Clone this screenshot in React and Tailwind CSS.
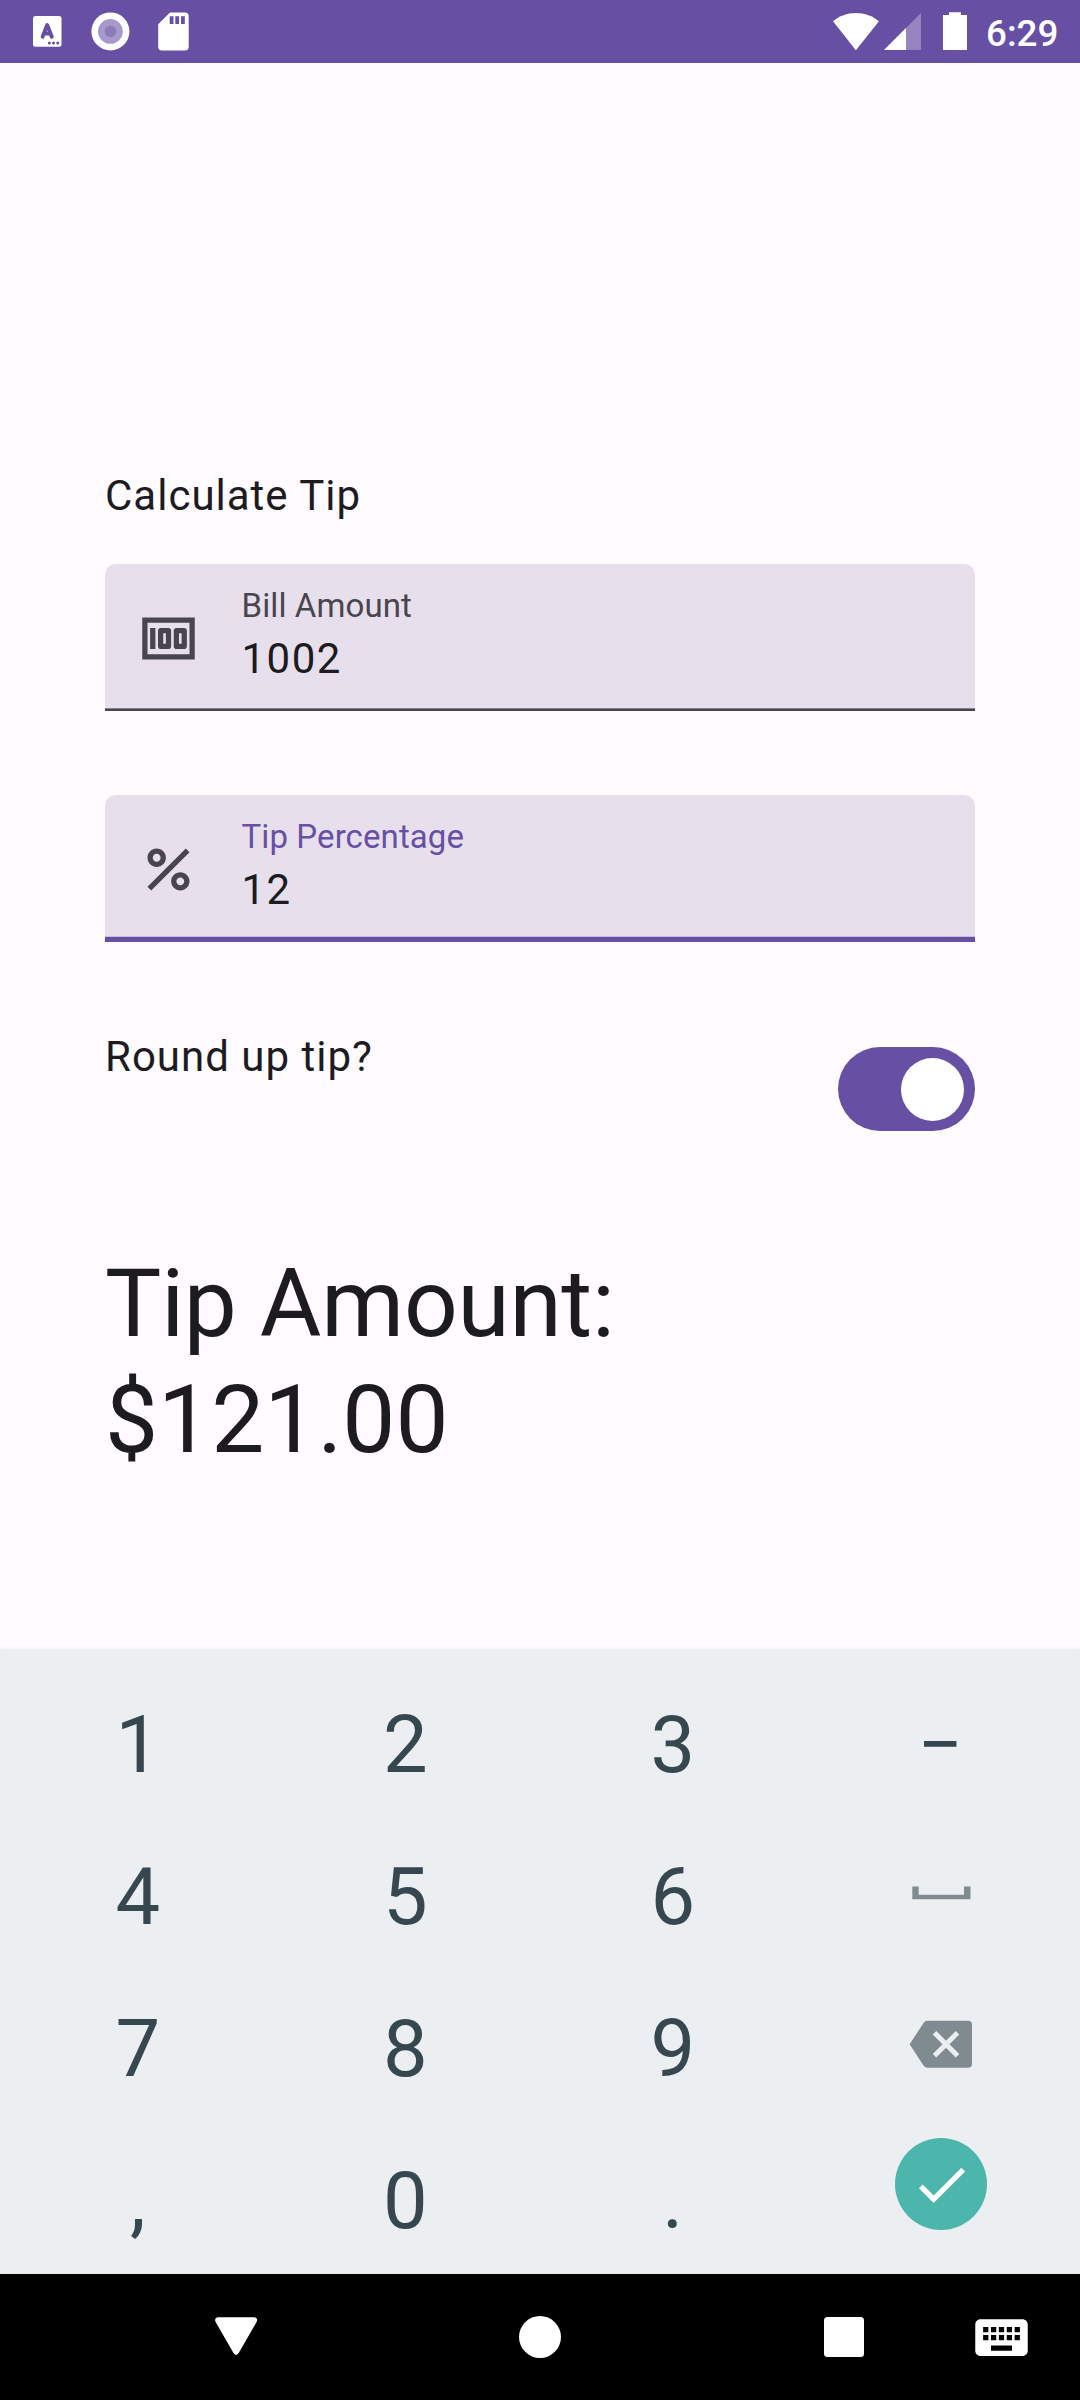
import { MdMoney, MdPercent, MdCheck, MdKeyboard } from "react-icons/md";

function StatusBar() {
  return (
    <header className="flex h-[63px] items-start bg-[#6750a4] text-white">
      <svg className="ml-[33px] mt-[16px] h-[31px] w-[29px]" viewBox="0 0 29 31">
        <rect width="28.5" height="30.7" rx="2.5" fill="#fff" />
        <path
          d="M9.6 20.7 14.2 9 18.8 20.7M10.8 17.6H17.6"
          fill="none"
          stroke="#6750a4"
          strokeWidth="3.9"
          strokeLinecap="round"
          strokeLinejoin="round"
        />
        <circle cx="16.3" cy="27" r="1.5" fill="#6750a4" />
        <circle cx="20.5" cy="27" r="1.5" fill="#6750a4" />
        <circle cx="24.7" cy="27" r="1.5" fill="#6750a4" />
      </svg>
      <svg className="ml-[29px] mt-[12px] h-[39px] w-[39px]" viewBox="0 0 39 39">
        <circle cx="19.4" cy="19.4" r="19" fill="#fff" />
        <circle cx="19.4" cy="19.4" r="12.4" fill="#a699cb" />
        <circle cx="19.4" cy="19.4" r="5.8" fill="#8c7ab9" />
      </svg>
      <svg className="ml-[28px] mt-[12px] h-[39px] w-[31px]" viewBox="0 0 31 39">
        <path
          d="M12 .6H27a3.7 3.7 0 0 1 3.7 3.7V34.7a3.7 3.7 0 0 1-3.7 3.7H4A3.7 3.7 0 0 1 .2 34.7V12.2Z"
          fill="#fff"
        />
        <path d="M11.7 4.3h3.8v7.7h-3.8zM17.3 4.3h3.8v7.7h-3.8zM23 4.3h3.8v7.7H23z" fill="#6750a4" />
      </svg>
      <svg className="ml-auto mt-[12px] h-[39px] w-[47px]" viewBox="0 0 47 39">
        <path d="M0 9.3C6.5 4 14 1 22.9 1S39.5 4 46 9.3L22.9 38.2Z" fill="#fff" />
      </svg>
      <svg className="ml-[4px] mt-[12px] h-[39px] w-[38px]" viewBox="0 0 38 39">
        <path d="M0 38 37 1V38Z" fill="#fff" fillOpacity=".3" />
        <path d="M0 38 22 16V38Z" fill="#fff" />
      </svg>
      <svg className="ml-[21px] mt-[12px] h-[39px] w-[24px]" viewBox="0 0 24 39">
        <path d="M6 .2H18V3H24V38H0V3H6Z" fill="#fff" />
      </svg>
      <span className="ml-[19px] mr-[22px] w-[72px] whitespace-nowrap text-[36.75px] font-medium leading-[67px]">
        6:29
      </span>
    </header>
  );
}

function Field({ Icon, label, value, focused }) {
  return (
    <div className="flex h-[147px] flex-col overflow-hidden rounded-t-[10.5px] bg-[#e7e0ec]">
      <div className="flex min-h-0 flex-1 items-start pl-[31.5px]">
        <Icon className="mt-[43px] size-[63px] shrink-0 text-[#49454f]" />
        <div className="ml-[42px] pt-[21px]">
          <div
            className={
              focused
                ? "text-[33px] leading-[42px] tracking-[0.1px] text-[#6750a4]"
                : "text-[33px] leading-[42px] tracking-[0.1px] text-[#49454f]"
            }
          >
            {label}
          </div>
          <div className="text-[42px] leading-[63px] tracking-[1.5px]">{value}</div>
        </div>
      </div>
      <svg className="block h-[6px] w-full shrink-0" viewBox="0 0 870 6" preserveAspectRatio="none">
        {focused ? (
          <rect y=".75" width="870" height="5.25" fill="#6750a4" />
        ) : (
          <rect y="3.375" width="870" height="2.625" fill="#49454f" />
        )}
      </svg>
    </div>
  );
}

function Key({ children }) {
  return <button className="h-[152px] text-center text-[79.5px] leading-[152px]">{children}</button>;
}

function IconKey({ children }) {
  return <button className="flex h-[152px] items-start justify-center pl-[2px]">{children}</button>;
}

function Keyboard() {
  return (
    <section className="h-[625px] bg-[#ebeff2] pl-[4px] pt-[20px] text-[#37474f] shadow-[0_-1px_4px_rgba(0,0,0,0.05)]">
      <div className="grid w-[1070px] grid-cols-4">
        <Key>1</Key>
        <Key>2</Key>
        <Key>3</Key>
        <Key>−</Key>
        <Key>4</Key>
        <Key>5</Key>
        <Key>6</Key>
        <IconKey>
          <svg className="mt-[65px] h-[14px] w-[59px]" viewBox="0 0 59 14">
            <path d="M.3 .5H6.7V8.7H52V.5H58.5V13.2H.3Z" fill="#808b90" />
          </svg>
        </IconKey>
        <Key>7</Key>
        <Key>8</Key>
        <Key>9</Key>
        <IconKey>
          <svg className="mt-[47px] h-[48px] w-[64px]" viewBox="0 0 64 48">
            <path
              d="M18.5 .8H59a4 4 0 0 1 4 4V43.7a4 4 0 0 1-4 4H18.5Q16 47.7 14.5 45.5L.6 24.3 14.5 3Q16 .8 18.5 .8Z"
              fill="#808b90"
            />
            <path d="M25.5 12.8 48.5 35.8M48.5 12.8 25.5 35.8" stroke="#ebeff2" strokeWidth="5" />
          </svg>
        </IconKey>
        <Key>,</Key>
        <Key>0</Key>
        <Key>.</Key>
        <IconKey>
          <span className="mt-[13px] flex size-[92px] items-center justify-center rounded-full bg-[#4db6ac] text-white">
            <MdCheck className="size-[63px]" />
          </span>
        </IconKey>
      </div>
    </section>
  );
}

function NavBar() {
  return (
    <nav className="flex h-[126px] items-center bg-black text-white">
      <svg className="ml-[214px] h-[42px] w-[44px]" viewBox="0 0 44 42">
        <path
          d="M4 1.2H40.2Q42.2 1.2 43 3Q43.3 4.6 42.6 6L25 36.5Q23.8 38.9 22.1 38.9T19.2 36.5L1.6 6Q.9 4.6 1.3 3Q2 1.2 4 1.2Z"
          fill="currentColor"
        />
      </svg>
      <span className="ml-[261px] size-[42px] rounded-full bg-white" />
      <span className="ml-[263px] size-[40px] rounded-[3.5px] bg-white" />
      <MdKeyboard className="ml-[106px] size-[63px]" />
    </nav>
  );
}

export default function App() {
  return (
    <div className="flex h-[2400px] w-[1080px] flex-col overflow-hidden bg-[#fffbff] font-[Roboto,sans-serif] text-[#1c1b1f]">
      <StatusBar />
      <main className="flex h-[1586px] flex-col px-[105px] pt-[401px]">
        <h1 className="text-[42px] leading-[63px] tracking-[1px]">Calculate Tip</h1>
        <div className="mt-[37px] flex flex-col gap-[84px]">
          <Field Icon={MdMoney} label="Bill Amount" value="1002" />
          <Field Icon={MdPercent} label="Tip Percentage" value="12" focused />
        </div>
        <div className="mt-[83px] flex items-start justify-between">
          <span className="text-[42px] leading-[63px] tracking-[1px]">Round up tip?</span>
          <span className="mt-[22px] flex h-[84px] w-[137px] items-center justify-end rounded-full bg-[#6750a4] pr-[11px]">
            <span className="size-[63px] rounded-full bg-white" />
          </span>
        </div>
        <p className="mt-[115px] w-[600px] text-[94.5px] leading-[115.5px]">
          <span className="tracking-[-0.25px]">Tip Amount:</span>
          <br />
          $121.00
        </p>
      </main>
      <Keyboard />
      <NavBar />
    </div>
  );
}
